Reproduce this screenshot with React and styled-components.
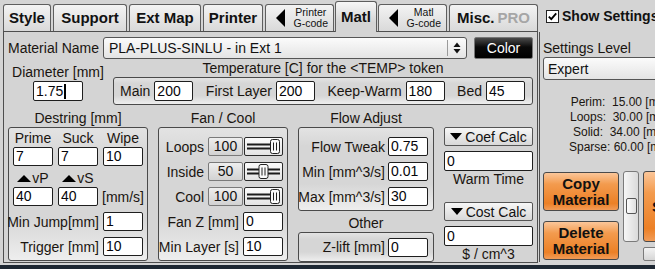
import React from "react";
import styled, { createGlobalStyle } from "styled-components";

const GlobalStyle = createGlobalStyle`
  html, body { margin: 0; padding: 0; background: #1d2732; }
  body { font-family: "Liberation Sans", Arial, sans-serif; }
  #root { width: 655px; height: 269px; overflow: hidden; }
`;

const Window = styled.div`
  width: 655px;
  height: 265px;
  background: #d4d4d4;
  display: flex;
  overflow: hidden;
  color: #1a1510;
  font-size: 14px;
  line-height: 16px;
`;

const LeftCol = styled.div`
  width: 535px;
  margin-left: 3px;
  flex-shrink: 0;
  display: flex;
  flex-direction: column;
`;

const TabBar = styled.div`
  height: 31px;
  display: flex;
  align-items: flex-end;
  gap: 2px;
`;

const Tab = styled.div`
  box-sizing: border-box;
  width: ${(p) => p.$w}px;
  height: ${(p) => (p.$active ? 31 : 27)}px;
  margin: ${(p) => (p.$active ? "0 -1px -1px -1px" : "0")};
  position: relative;
  z-index: ${(p) => (p.$active ? 1 : 0)};
  border: 1px solid #5e5e5e;
  border-bottom: none;
  border-radius: 3px 3px 0 0;
  background: ${(p) =>
    p.$active
      ? "linear-gradient(#f7f7f7, #d4d4d4 70%)"
      : "linear-gradient(#f3f3f3, #d9d9d9)"};
  display: flex;
  align-items: center;
  justify-content: ${(p) => (p.$arrow ? "space-between" : "center")};
  padding: ${(p) => (p.$arrow ? "0 5px 0 10px" : "0")};
  gap: 3px;
  font-size: 15px;
  font-weight: bold;
  color: #111;
`;

const TabSmall = styled.div`
  font-size: 10.5px;
  line-height: 11px;
  font-weight: normal;
  text-align: center;
  color: #111;
`;

const Muted = styled.span`
  color: #a6a6a6;
`;

const Triangle = styled.span`
  display: inline-block;
  width: 0;
  height: 0;
  flex-shrink: 0;
  ${(p) =>
    p.$dir === "left"
      ? `border-top: ${p.$h / 2}px solid transparent; border-bottom: ${p.$h / 2}px solid transparent; border-right: ${p.$w}px solid #000;`
      : p.$dir === "up"
      ? `border-left: ${p.$w / 2}px solid transparent; border-right: ${p.$w / 2}px solid transparent; border-bottom: ${p.$h}px solid #000;`
      : `border-left: ${p.$w / 2}px solid transparent; border-right: ${p.$w / 2}px solid transparent; border-top: ${p.$h}px solid #000;`}
`;

const MainPanel = styled.div`
  box-sizing: border-box;
  height: 232px;
  border: 1px solid #4e4e4e;
  padding: 5px 4px 0 4px;
  display: flex;
  flex-direction: column;
`;

const MaterialRow = styled.div`
  display: flex;
  align-items: center;
  height: 22px;
`;

const MatLabel = styled.span`
  width: 95px;
  white-space: nowrap;
`;

const Select = styled.div`
  box-sizing: border-box;
  width: ${(p) => p.$w}px;
  height: ${(p) => p.$h}px;
  flex-shrink: 0;
  border: 1px solid #555;
  border-radius: 3px;
  background: linear-gradient(#fbfbfb, #e4e4e4);
  display: flex;
  align-items: center;
  padding-left: ${(p) => p.$pl}px;
  white-space: nowrap;
  color: #111;
`;

const SelectArrows = styled.div`
  margin-left: auto;
  width: 18px;
  height: 16px;
  border-left: 1px solid #9a9a9a;
  display: flex;
  align-items: center;
  justify-content: center;
`;

const ColorButton = styled.div`
  box-sizing: border-box;
  width: 59px;
  height: 22px;
  margin-left: 7px;
  border: 1px solid #777;
  border-radius: 2px;
  background: linear-gradient(#4a4a4a, #0a0a0a 45%, #000);
  color: #fff;
  display: flex;
  align-items: center;
  justify-content: center;
`;

const Row2 = styled.div`
  display: flex;
  height: 46px;
`;

const DiamCol = styled.div`
  width: 100px;
  display: flex;
  flex-direction: column;
  align-items: center;
  padding-top: 5px;
  gap: 1px;
`;

const TempCol = styled.div`
  width: 420px;
  margin-left: 5px;
  display: flex;
  flex-direction: column;
`;

const Title = styled.div`
  text-align: center;
  height: 16px;
  margin-top: ${(p) => p.$mt}px;
  margin-bottom: 1px;
  white-space: nowrap;
`;

const GroupBox = styled.div`
  box-sizing: border-box;
  height: ${(p) => p.$h}px;
  border: 1px solid #4a4a4a;
  border-radius: 3px;
  background: linear-gradient(#e3e3e3, #d6d6d6 22%, #d6d6d6 68%, #eeeeee);
`;

const TempBox = styled(GroupBox)`
  display: flex;
  align-items: center;
  justify-content: space-between;
  padding: 0 7px 0 6px;
`;

const InlineGroup = styled.div`
  display: flex;
  align-items: center;
  gap: ${(p) => p.$gap ?? 4}px;
  white-space: nowrap;
`;

const Field = styled.div`
  box-sizing: border-box;
  width: ${(p) => p.$w}px;
  height: ${(p) => p.$h || 19}px;
  flex-shrink: 0;
  border: 1px solid #1e1e1e;
  border-radius: 2px;
  background: #fff;
  padding-left: 2px;
  line-height: ${(p) => (p.$h || 19) - 2}px;
  color: #05050a;
  white-space: nowrap;
  overflow: hidden;
  margin-top: ${(p) => p.$mt || 0}px;
`;

const Caret = styled.span`
  display: inline-block;
  width: 2px;
  height: 15px;
  background: #000;
  vertical-align: middle;
  margin-left: 1px;
  margin-top: -2px;
`;

const Row3 = styled.div`
  display: flex;
  gap: 10px;
  flex: 1;
`;

const Column = styled.div`
  width: ${(p) => p.$w}px;
  flex-shrink: 0;
  display: flex;
  flex-direction: column;
  padding-top: ${(p) => p.$pt || 0}px;
`;

const DestringBox = styled(GroupBox)`
  padding: 2px 4px 0 4px;
  display: flex;
  flex-direction: column;
`;

const Grid3 = styled.div`
  display: grid;
  grid-template-columns: repeat(3, 40px);
  column-gap: 5px;
  align-items: center;
  justify-items: center;
  margin-top: ${(p) => p.$mt || 0}px;
  height: ${(p) => p.$h}px;
`;

const SmallLabel = styled.span`
  display: flex;
  align-items: center;
  gap: 1px;
  white-space: nowrap;
`;

const FormRow = styled.div`
  display: flex;
  justify-content: flex-end;
  align-items: center;
  gap: ${(p) => p.$gap ?? 4}px;
  height: 19px;
  margin-top: ${(p) => p.$mt || 0}px;
  white-space: nowrap;
`;

const StackBox = styled(GroupBox)`
  padding: 9px ${(p) => p.$pr}px 0 0;
  display: flex;
  flex-direction: column;
  gap: 6px;
`;

const OtherBox = styled(GroupBox)`
  padding-right: 5px;
  display: flex;
  align-items: center;
  justify-content: flex-end;
`;

const SliderGroup = styled.div`
  display: flex;
  gap: 1px;
`;

const ValueBox = styled.div`
  box-sizing: border-box;
  width: 35px;
  height: 19px;
  border: 1px solid #7a7a7a;
  border-radius: 2px;
  background: linear-gradient(#eeeeee, #d2d2d2);
  text-align: center;
  line-height: 17px;
  color: #111;
`;

const SliderBox = styled.div`
  box-sizing: border-box;
  width: 39px;
  height: 19px;
  border: 1px solid #2a2a2a;
  border-radius: 2px;
  background: linear-gradient(#fbfbfb, #e4e4e4);
  display: flex;
`;

const CalcButton = styled.div`
  box-sizing: border-box;
  height: 19px;
  margin-top: ${(p) => p.$mt || 0}px;
  border: 1px solid #555;
  border-radius: 2px;
  background: linear-gradient(#f7f7f7, #d8d8d8);
  display: flex;
  align-items: center;
  justify-content: center;
  gap: 3px;
  color: #111;
  white-space: nowrap;
`;

const CalcLabel = styled.div`
  text-align: center;
  height: 16px;
`;

const RightCol = styled.div`
  flex: 1;
  min-width: 0;
  margin-left: 1px;
  display: flex;
  flex-direction: column;
`;

const ShowRow = styled.div`
  height: 32px;
  display: flex;
  align-items: center;
  padding-left: 7px;
  gap: 3px;
  font-weight: bold;
  white-space: nowrap;
  color: #111;
`;

const CheckBox = styled.div`
  box-sizing: border-box;
  width: 13px;
  height: 13px;
  flex-shrink: 0;
  border: 1px solid #222;
  background: #fff;
  display: flex;
  align-items: center;
  justify-content: center;
`;

const RightPanel = styled.div`
  box-sizing: border-box;
  height: 230px;
  border-left: 1px solid #4e4e4e;
  padding: 8px 0 0 3px;
  display: flex;
  flex-direction: column;
`;

const LevelLabel = styled.div`
  height: 16px;
  margin-bottom: 1px;
  white-space: nowrap;
`;

const Stats = styled.div`
  width: 166px;
  flex-shrink: 0;
  margin-top: 15px;
  text-align: center;
  font-size: 12px;
  line-height: 15px;
  white-space: pre;
  color: #1a1510;
`;

const BottomRow = styled.div`
  display: flex;
  align-items: flex-start;
  margin-top: 16px;
`;

const ButtonStack = styled.div`
  display: flex;
  flex-direction: column;
  gap: ${(p) => p.$gap}px;
  padding-top: ${(p) => p.$pt || 0}px;
  margin-left: ${(p) => p.$ml || 0}px;
  flex-shrink: 0;
`;

const OrangeButton = styled.div`
  box-sizing: border-box;
  width: ${(p) => p.$w}px;
  height: ${(p) => p.$h}px;
  border: 1px solid #4a4a4a;
  border-radius: 3px;
  background: linear-gradient(#fbc699, #f39b4e 30%, #ec8026 82%, #f29c58);
  display: flex;
  align-items: center;
  justify-content: ${(p) => (p.$left ? "flex-start" : "center")};
  padding-left: ${(p) => (p.$left ? 8 : 0)}px;
  text-align: center;
  font-size: 15px;
  line-height: 16px;
  font-weight: bold;
  color: #111;
`;

const VSlider = styled.div`
  box-sizing: border-box;
  width: 16px;
  height: 71px;
  margin-left: 4px;
  flex-shrink: 0;
  border: 1px solid #7a7a7a;
  border-radius: 3px;
  background: linear-gradient(to right, #f6f6f6, #dadada);
  display: flex;
  justify-content: center;
  padding-top: 26px;
`;

const VThumb = styled.div`
  box-sizing: border-box;
  width: 11px;
  height: 16px;
  border: 1px solid #555;
  border-radius: 2px;
  background: linear-gradient(to right, #fcfcfc, #dedede);
`;

const GrayButton = styled.div`
  box-sizing: border-box;
  width: ${(p) => p.$w}px;
  height: ${(p) => p.$h}px;
  border: 1px solid #7a7a7a;
  border-radius: 2px;
  background: linear-gradient(#f3f3f3, #d6d6d6);
`;

function Slider({ value }) {
  const x = 2 + (23 * value) / 100;
  return (
    <SliderBox>
      <svg width="37" height="17" viewBox="0 0 37 17">
        <line x1="2" y1="6.5" x2="35" y2="6.5" stroke="#1a1a1a" strokeWidth="2" />
        <line x1="2" y1="10.5" x2="35" y2="10.5" stroke="#1a1a1a" strokeWidth="2" />
        <rect x={x + 0.5} y="1.5" width="9" height="14" rx="2" fill="#fafafa" stroke="#222" />
        <line x1={x + 3.5} y1="4.5" x2={x + 3.5} y2="12.5" stroke="#222" strokeWidth="1" />
        <line x1={x + 6.5} y1="4.5" x2={x + 6.5} y2="12.5" stroke="#222" strokeWidth="1" />
      </svg>
    </SliderBox>
  );
}

const tabs = [
  { label: "Style", w: 48 },
  { label: "Support", w: 74 },
  { label: "Ext Map", w: 72 },
  { label: "Printer", w: 60 },
  { arrow: ["Printer", "G-code"], w: 69 },
  { label: "Matl", w: 42, active: true },
  { arrow: ["Matl", "G-code"], w: 69 },
  { misc: true, w: 89 },
];

const temps = [
  ["Main", "200"],
  ["First Layer", "200"],
  ["Keep-Warm", "180"],
  ["Bed", "45"],
];

const fans = [
  ["Loops", 100],
  ["Inside", 50],
  ["Cool", 100],
];

const flows = [
  ["Flow Tweak", "0.75"],
  ["Min [mm^3/s]", "0.01"],
  ["Max [mm^3/s]", "30"],
];

export default function App() {
  return (
    <>
      <GlobalStyle />
      <Window>
        <LeftCol>
          <TabBar>
            {tabs.map((t, i) => (
              <Tab key={i} $w={t.w} $active={t.active} $arrow={!!t.arrow}>
                {t.arrow ? (
                  <>
                    <Triangle $dir="left" $w={9} $h={18} />
                    <TabSmall>
                      {t.arrow[0]}
                      <br />
                      {t.arrow[1]}
                    </TabSmall>
                  </>
                ) : t.misc ? (
                  <>
                    <span>Misc.</span>
                    <Muted>PRO</Muted>
                  </>
                ) : (
                  t.label
                )}
              </Tab>
            ))}
          </TabBar>
          <MainPanel>
            <MaterialRow>
              <MatLabel>Material Name</MatLabel>
              <Select $w={364} $h={22} $pl={5}>
                PLA-PLUS-SINLU - in Ext 1
                <SelectArrows>
                  <svg width="8" height="14" viewBox="0 0 8 14">
                    <polygon points="0.5,6 4,1.5 7.5,6" fill="#111" />
                    <polygon points="0.5,8 4,12.5 7.5,8" fill="#111" />
                  </svg>
                </SelectArrows>
              </Select>
              <ColorButton>Color</ColorButton>
            </MaterialRow>
            <Row2>
              <DiamCol>
                <span>Diameter [mm]</span>
                <Field $w={50} $h={20}>
                  1.75
                  <Caret />
                </Field>
              </DiamCol>
              <TempCol>
                <Title $mt={1}>{"Temperature [C] for the <TEMP> token"}</Title>
                <TempBox $h={28}>
                  {temps.map(([l, v]) => (
                    <InlineGroup key={l}>
                      <span>{l}</span>
                      <Field $w={39} $h={20}>
                        {v}
                      </Field>
                    </InlineGroup>
                  ))}
                </TempBox>
              </TempCol>
            </Row2>
            <Row3>
              <Column $w={140}>
                <Title $mt={5}>Destring [mm]</Title>
                <DestringBox $h={134}>
                  <Grid3 $h={16}>
                    <span>Prime</span>
                    <span>Suck</span>
                    <span>Wipe</span>
                  </Grid3>
                  <Grid3 $h={19} $mt={1}>
                    <Field $w={40}>7</Field>
                    <Field $w={40}>7</Field>
                    <Field $w={40}>10</Field>
                  </Grid3>
                  <Grid3 $h={16} $mt={4}>
                    <SmallLabel>
                      <Triangle $dir="up" $w={14} $h={7} />
                      vP
                    </SmallLabel>
                    <SmallLabel>
                      <Triangle $dir="up" $w={14} $h={7} />
                      vS
                    </SmallLabel>
                    <span />
                  </Grid3>
                  <Grid3 $h={19} $mt={1}>
                    <Field $w={40}>40</Field>
                    <Field $w={40}>40</Field>
                    <span>[mm/s]</span>
                  </Grid3>
                  <FormRow $mt={6}>
                    <span>Min Jump[mm]</span>
                    <Field $w={40}>1</Field>
                  </FormRow>
                  <FormRow $mt={6}>
                    <span>Trigger [mm]</span>
                    <Field $w={40}>10</Field>
                  </FormRow>
                </DestringBox>
              </Column>
              <Column $w={130}>
                <Title $mt={5}>Fan / Cool</Title>
                <StackBox $h={134} $pr={4}>
                  {fans.map(([l, v]) => (
                    <FormRow key={l}>
                      <span>{l}</span>
                      <SliderGroup>
                        <ValueBox>{v}</ValueBox>
                        <Slider value={v} />
                      </SliderGroup>
                    </FormRow>
                  ))}
                  <FormRow>
                    <span>Fan Z [mm]</span>
                    <Field $w={40}>0</Field>
                  </FormRow>
                  <FormRow>
                    <span>Min Layer [s]</span>
                    <Field $w={40}>10</Field>
                  </FormRow>
                </StackBox>
              </Column>
              <Column $w={136}>
                <Title $mt={5}>Flow Adjust</Title>
                <StackBox $h={84} $pr={5}>
                  {flows.map(([l, v]) => (
                    <FormRow key={l} $gap={3}>
                      <span>{l}</span>
                      <Field $w={40}>{v}</Field>
                    </FormRow>
                  ))}
                </StackBox>
                <Title $mt={4}>Other</Title>
                <OtherBox $h={30}>
                  <InlineGroup $gap={3}>
                    <span>Z-lift [mm]</span>
                    <Field $w={40}>0</Field>
                  </InlineGroup>
                </OtherBox>
              </Column>
              <Column $w={89} $pt={22}>
                <CalcButton>
                  <Triangle $dir="down" $w={13} $h={7} />
                  Coef Calc
                </CalcButton>
                <Field $w={89} $h={20} $mt={5}>
                  0
                </Field>
                <CalcLabel>Warm Time</CalcLabel>
                <CalcButton $mt={15}>
                  <Triangle $dir="down" $w={13} $h={7} />
                  Cost Calc
                </CalcButton>
                <Field $w={89} $h={20} $mt={5}>
                  0
                </Field>
                <CalcLabel>$ / cm^3</CalcLabel>
              </Column>
            </Row3>
          </MainPanel>
        </LeftCol>
        <RightCol>
          <ShowRow>
            <CheckBox>
              <svg width="11" height="11" viewBox="0 0 11 11">
                <polyline points="1.8,5.6 4.3,8.2 9.2,2.4" fill="none" stroke="#000" strokeWidth="1.8" />
              </svg>
            </CheckBox>
            Show Settings
          </ShowRow>
          <RightPanel>
            <LevelLabel>Settings Level</LevelLabel>
            <Select $w={140} $h={23} $pl={4}>
              Expert
            </Select>
            <Stats>
              {"Perim:  15.00 [mm/s]\nLoops:  30.00 [mm/s]\nSolid:  34.00 [mm/s]\nSparse: 60.00 [mm/s]"}
            </Stats>
            <BottomRow>
              <ButtonStack $gap={10} $pt={1}>
                <OrangeButton $w={76} $h={39}>
                  Copy
                  <br />
                  Material
                </OrangeButton>
                <OrangeButton $w={76} $h={39}>
                  Delete
                  <br />
                  Material
                </OrangeButton>
              </ButtonStack>
              <VSlider>
                <VThumb />
              </VSlider>
              <ButtonStack $gap={5} $ml={4}>
                <OrangeButton $w={70} $h={71} $left>
                  Save
                </OrangeButton>
                <GrayButton $w={70} $h={14} />
              </ButtonStack>
            </BottomRow>
          </RightPanel>
        </RightCol>
      </Window>
    </>
  );
}
